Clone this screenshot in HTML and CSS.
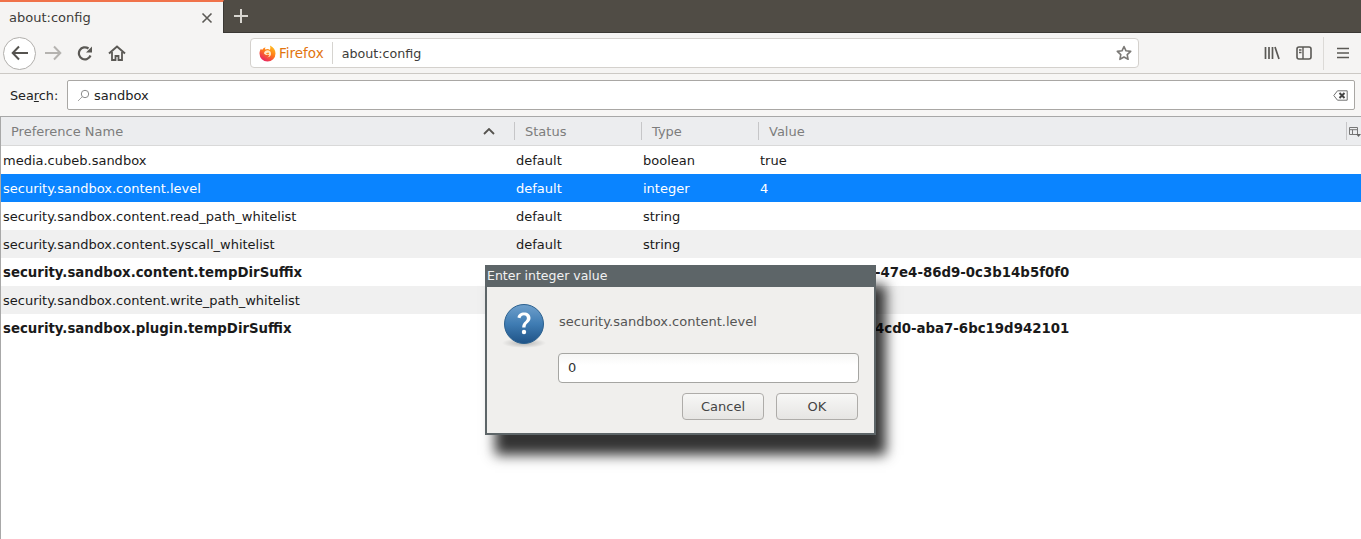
FILE: index.html
```html
<!DOCTYPE html>
<html lang="en">
<head>
<meta charset="utf-8">
<title>about:config</title>
<link rel="stylesheet" href="styles.css">
</head>
<body>
<div class="tabstrip">
  <div class="tab">
    <span class="tab-title">about:config</span>
    <svg class="tab-close" width="12" height="12" viewBox="0 0 12 12"><path d="M1.500 1.500l9 9M10.500 1.500l-9 9" stroke="#5c5a56" stroke-width="1.600" fill="none"/></svg>
  </div>
  <svg class="newtab" width="16" height="16" viewBox="0 0 16 16"><path d="M8 1v14M1 8h14" stroke="#d8d6d0" stroke-width="2" fill="none"/></svg>
</div>
<div class="navbar">
  <div class="backbtn">
    <svg width="18" height="16" viewBox="0 0 18 16"><path d="M8 1.500L1.700 8 8 14.500M2 8h15" stroke="#55534f" stroke-width="2" fill="none"/></svg>
  </div>
  <svg class="fwd" width="18" height="16" viewBox="0 0 18 16"><path d="M10 1.500L16.300 8 10 14.500M16 8H1" stroke="#b5b3b0" stroke-width="2" fill="none"/></svg>
  <svg class="reload" width="16" height="16" viewBox="0 0 16 16"><path d="M13.500 10.500A6 6 0 1 1 11.500 3.500" stroke="#5b5955" stroke-width="2.200" fill="none"/><path d="M15 1.500v6H9z" fill="#5b5955"/></svg>
  <svg class="home" width="18" height="16" viewBox="0 0 18 16"><path d="M1 8.500L9 1.500l8 7" stroke="#5b5955" stroke-width="2" fill="none"/><path d="M4 7v8h3.500v-4h3v4H14V7" stroke="#5b5955" stroke-width="1.800" fill="none"/></svg>
  <div class="urlbar">
    <svg class="fxlogo" width="17" height="17" viewBox="0 0 17 17">
      <defs>
        <linearGradient id="fxg" x1=".8" y1="0" x2=".2" y2="1"><stop offset="0" stop-color="#ffc11f"/><stop offset=".45" stop-color="#ff7a1a"/><stop offset="1" stop-color="#e6176a"/></linearGradient>
      </defs>
      <path d="M11 .5c3.500 1.500 5.500 4.500 5.500 8a8 8 0 0 1-16 0c0-2 .6-3.500 1.500-4.800L3 5c.8-1.300 2-2.300 3.500-2.800C6 3.200 6 4 6.300 4.600 8 3.500 10 4 11 5c.5-1.500.5-3 0-4.500z" fill="url(#fxg)"/>
      <path d="M5 8.500c0-2 2-3.500 4-3.200 2 .3 3.300 2 3 4-.3 2-2 3.200-4 3 1.500-.3 2.500-1.300 2.300-2.500-1.800.6-3.800.4-5.300-1.300z" fill="#ffe9c9"/>
      <path d="M7 8.300l2.500-.8.700 1.400-2 .6z" fill="#ff8a1f"/>
    </svg>
    <span class="brand">Firefox</span>
    <span class="urlsep"></span>
    <span class="urltext">about:config</span>
    <svg class="star" width="16" height="16" viewBox="0 0 16 16"><path d="M8 1.500l2 4.300 4.700.6-3.500 3.200.9 4.700L8 12l-4.100 2.300.9-4.700L1.300 6.400 6 5.800z" fill="none" stroke="#7b7976" stroke-width="1.600" stroke-linejoin="round"/></svg>
  </div>
  <svg class="library" width="16" height="16" viewBox="0 0 16 16"><path d="M1.500 2v12M5 2v12M8.500 2v12M11 2l4 12" stroke="#5b5955" stroke-width="1.700" fill="none"/></svg>
  <svg class="sidebar" width="16" height="14" viewBox="0 0 16 14"><rect x="1" y="1" width="14" height="12" rx="2" fill="none" stroke="#5b5955" stroke-width="1.600"/><path d="M7 1v12M3 4h2.500M3 6.500h2.500" stroke="#5b5955" stroke-width="1.400" fill="none"/></svg>
  <span class="navsep"></span>
  <svg class="menu" width="14" height="12" viewBox="0 0 14 12"><path d="M1 1.500h12M1 6h12M1 10.500h12" stroke="#5b5955" stroke-width="1.700" fill="none"/></svg>
</div>
<div class="searchrow">
  <label class="searchlabel">Sea<u>r</u>ch:</label>
  <div class="searchbox">
    <svg class="mag" width="13" height="13" viewBox="0 0 13 13"><circle cx="8" cy="5" r="3.700" fill="none" stroke="#8b8b8b"/><path d="M5.300 7.700L1 12" stroke="#a5a5a5" fill="none"/></svg>
    <span class="searchtext">sandbox</span>
    <svg class="clear" width="15" height="11" viewBox="0 0 15 11"><path d="M4.500 .8h9.700v9.400H4.500L.8 5.500z" fill="#fff" stroke="#707070"/><path d="M6.500 3l5 5M11.500 3l-5 5" stroke="#444" stroke-width="2" fill="none"/></svg>
  </div>
</div>
<div class="tree">
  <div class="thead">
    <div class="th c1"><span>Preference Name</span><svg class="sort" width="12" height="7" viewBox="0 0 12 7"><path d="M1 6l5-5 5 5" stroke="#55534f" stroke-width="1.800" fill="none"/></svg></div>
    <div class="th c2">Status</div>
    <div class="th c3">Type</div>
    <div class="th c4">Value</div>
    <div class="th c5"><svg width="12" height="11" viewBox="0 0 12 11"><path d="M.5 1.500h8v7h-8zM.5 3.700h8M3.500 3.700v4.800" fill="none" stroke="#777"/><path d="M7 8h5l-2.500 3z" fill="#666"/></svg></div>
  </div>
  <div class="row"><div class="c1">media.cubeb.sandbox</div><div class="c2">default</div><div class="c3">boolean</div><div class="c4">true</div></div>
  <div class="row sel"><div class="c1">security.sandbox.content.level</div><div class="c2">default</div><div class="c3">integer</div><div class="c4">4</div></div>
  <div class="row"><div class="c1">security.sandbox.content.read_path_whitelist</div><div class="c2">default</div><div class="c3">string</div><div class="c4"></div></div>
  <div class="row alt"><div class="c1">security.sandbox.content.syscall_whitelist</div><div class="c2">default</div><div class="c3">string</div><div class="c4"></div></div>
  <div class="row bold"><div class="c1">security.sandbox.content.tempDirSuffix</div><div class="c2"></div><div class="c3"></div><div class="c4 tail">-47e4-86d9-0c3b14b5f0f0</div></div>
  <div class="row alt"><div class="c1">security.sandbox.content.write_path_whitelist</div><div class="c2"></div><div class="c3"></div><div class="c4"></div></div>
  <div class="row bold"><div class="c1">security.sandbox.plugin.tempDirSuffix</div><div class="c2"></div><div class="c3"></div><div class="c4 tail">4cd0-aba7-6bc19d942101</div></div>
</div>
<div class="dialog">
  <div class="dlg-title">Enter integer value</div>
  <div class="dlg-body">
    <div class="dlg-main">
      <svg class="dlg-icon" width="44" height="46" viewBox="0 0 44 46">
        <defs>
          <linearGradient id="ball" x1="0" y1="0" x2="0" y2="1"><stop offset="0" stop-color="#6fa0cc"/><stop offset=".5" stop-color="#3f7cb3"/><stop offset="1" stop-color="#1f5387"/></linearGradient>
          <radialGradient id="shade"><stop offset="0" stop-color="#000" stop-opacity=".25"/><stop offset="1" stop-color="#000" stop-opacity="0"/></radialGradient>
        </defs>
        <ellipse cx="22" cy="40" rx="22" ry="5" fill="url(#shade)"/>
        <circle cx="22" cy="21" r="19.500" fill="url(#ball)" stroke="#2c618f"/>
        <path d="M15.500 14.500c.5-3.500 3.300-5 6.500-5 3.800 0 6.500 2 6.500 5.500 0 4.500-5 4.700-5 9.500h-3.300c0-5.500 4.700-6 4.700-9.300 0-1.700-1.200-2.900-3-2.900-1.700 0-3 1-3.400 2.900z" fill="#fff"/>
        <circle cx="22" cy="29" r="2.200" fill="#fff"/>
      </svg>
      <div class="dlg-content">
        <div class="dlg-msg">security.sandbox.content.level</div>
        <div class="dlg-input">0</div>
      </div>
    </div>
    <div class="dlg-buttons">
      <button class="dlg-btn" type="button">Cancel</button>
      <button class="dlg-btn" type="button">OK</button>
    </div>
  </div>
</div>
</body>
</html>
```
FILE: styles.css
```css
* { box-sizing: border-box; }
html, body { margin: 0; padding: 0; height: 539px; overflow: hidden; }
body { background: #fff; font-family: "DejaVu Sans", sans-serif; font-size: 13px; color: #1a1a1a; position: relative; }
svg { display: block; flex: none; }

.tabstrip { height: 33px; background: #504c45; display: flex; align-items: flex-start; border-bottom: 1px solid #3a3834; }
.tab { width: 224px; height: 33px; background: #f5f4f3; border-top: 2px solid #f0724a; border-right: 1px solid #3a3834; display: flex; align-items: center; padding: 0 10px 0 9px; justify-content: space-between; }
.tab-title { color: #3d3c39; font-size: 13px; }
.newtab { margin: 8px 0 0 9px; }

.navbar { height: 41px; background: #f5f4f3; border-bottom: 1px solid #ccc9c5; display: flex; align-items: center; padding-left: 3px; }
.backbtn { width: 33px; height: 33px; border-radius: 50%; border: 1px solid #b1afac; background: #fff; display: flex; align-items: center; justify-content: center; }
.fwd { margin-left: 8px; }
.reload { margin-left: 15px; }
.home { margin-left: 15px; }
.urlbar { width: 889px; height: 30px; margin-left: 124px; background: #fff; border: 1px solid #d4d1cd; border-radius: 4px; display: flex; align-items: center; padding: 0 6px 0 8px; }
.brand { color: #e2740e; margin-left: 3px; font-size: 13.5px; }
.urlsep { width: 1px; height: 22px; background: #d6d4d0; margin: 0 9px 0 8px; }
.urltext { color: #3d3c39; font-size: 12.700px; flex: 1; }
.library { margin-left: 125px; }
.sidebar { margin-left: 16px; }
.navsep { width: 1px; height: 33px; background: #dcdad7; margin-left: 11px; }
.menu { margin-left: 12px; }

.searchrow { height: 42px; background: #f7f6f5; display: flex; align-items: center; padding: 0 6px 0 10px; }
.searchlabel { color: #222; width: 57px; font-size: 12.800px; }
.searchbox { flex: 1; height: 30px; background: #fff; border: 1px solid #a9a7a4; border-radius: 2px; display: flex; align-items: center; padding: 0 6px 0 9px; }
.mag { margin-right: 4px; }
.searchtext { flex: 1; color: #222; }

.tree { border-left: 1px solid #a8a8a8; border-top: 1px solid #a8a8a8; height: 423px; }
.thead { height: 29px; background: #ecedef; border-bottom: 1px solid #d9d9d9; display: flex; align-items: center; color: #7d7d7d; }
.th { height: 18px; display: flex; align-items: center; }
.thead .c1 { width: 513px; justify-content: space-between; padding: 0 19px 0 10px; }
.thead .c2, .thead .c3, .thead .c4, .thead .c5 { border-left: 1px solid #c6c6c8; padding-left: 10px; }
.thead .c5 { padding-left: 2px; }
.row { height: 28px; display: flex; align-items: center; }
.row .c1 { padding-left: 2px; }
.row .c2, .row .c3, .row .c4 { padding-left: 1px; }
.c1 { width: 514px; flex: none; }
.c2 { width: 127px; flex: none; }
.c3 { width: 117px; flex: none; }
.c4 { width: 588px; flex: none; }
.c5 { flex: 1; }
.row .c1, .row .c2, .row .c3, .row .c4 { white-space: nowrap; }
.row .tail { padding-left: 116px; }
.alt { background: #f0f0f0; }
.sel { background: #0a84ff; color: #fff; }
.bold { font-weight: 700; font-size: 13.33px; }

.dialog { position: absolute; left: 485px; top: 265px; width: 391px; height: 170px; background: #f0efed; border: 2px solid #5d6568; box-shadow: 10px 20px 12px rgba(0,0,0,.8); display: flex; flex-direction: column; }
.dlg-title { height: 20px; background: #5d6568; color: #f2f2f2; font-size: 12.500px; display: flex; align-items: flex-start; line-height: 18px; }
.dlg-body { flex: 1; display: flex; flex-direction: column; padding: 16px 16px 0 15px; }
.dlg-main { display: flex; }
.dlg-icon { margin-right: 12px; }
.dlg-content { flex: 1; padding-top: 10px; }
.dlg-msg { color: #555; height: 40px; line-height: 18px; padding-left: 1px; }
.dlg-input { height: 30px; width: 301px; border: 1px solid #a5a5a2; border-radius: 4px; background: linear-gradient(#f6f6f5, #fff 40%); color: #333; display: flex; align-items: center; padding: 0 0 2px 9px; }
.dlg-buttons { display: flex; justify-content: flex-end; gap: 12px; margin-top: 10px; }
.dlg-btn { width: 82px; height: 27px; border: 1px solid #aeaca9; border-radius: 4px; background: linear-gradient(#f7f7f6, #e6e5e3); color: #444; font: inherit; padding: 0; }
```
